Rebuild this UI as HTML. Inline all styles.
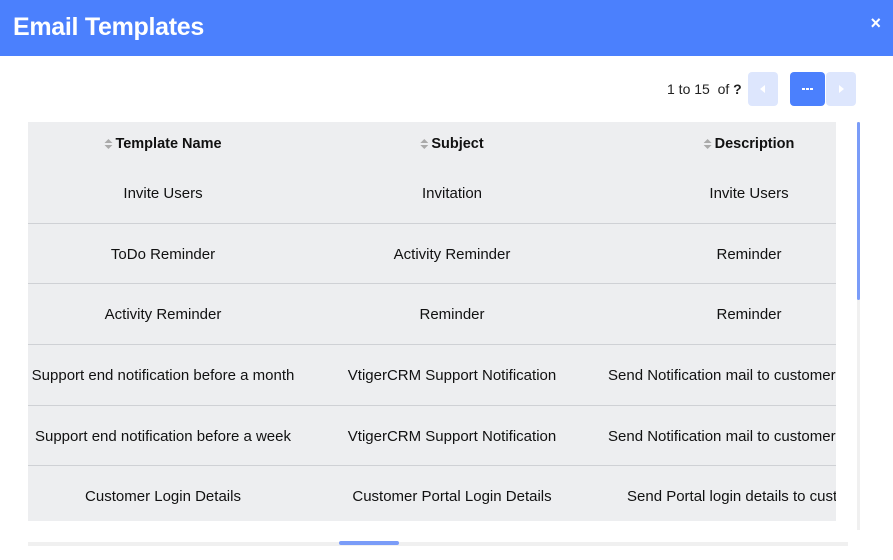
<!DOCTYPE html>
<html><head><style>
*{margin:0;padding:0;box-sizing:border-box}
body{width:893px;height:560px;background:#fff;font-family:"Liberation Sans",sans-serif;position:relative;overflow:hidden}
.hdr{position:absolute;left:0;top:0;width:893px;height:56px;background:#4b80fd}
.hdr h1{position:absolute;left:13px;top:13px;color:#fff;font-size:25px;font-weight:bold;letter-spacing:-0.3px}
.x{position:absolute;right:12px;top:13px;color:#fff;font-size:18px;font-weight:bold}
.pg{position:absolute;left:667px;top:81px;font-size:14px;color:#222}
.btn{position:absolute;top:72px;width:30px;height:34px;border-radius:4px;background:#dde6fd}
.tbl{position:absolute;left:28px;top:122px;width:808px;height:399px;background:#edeef0;overflow:hidden}
.t{position:absolute;font-size:15px;color:#111;white-space:nowrap;transform:translateX(-50%)}
.th{font-weight:bold;font-size:14.5px}
.line{position:absolute;left:0;width:808px;height:1px;background:#cfd1d5}
.ar{display:inline-block;width:8px;vertical-align:middle;margin-right:3px}
</style></head><body>
<div class="hdr"><h1>Email Templates</h1><div class="x">×</div></div>
<div class="pg">1 to 15 &nbsp;of <b>?</b></div>
<div class="btn" style="left:748px"><svg width="30" height="34"><path d="M17 13v8l-5-4z" fill="#fff"/></svg></div>
<div class="btn" style="left:790px;background:#4b80fd;width:35px"><svg width="35" height="34"><rect x="12" y="16" width="3" height="2" fill="#fff"/><rect x="16" y="16" width="3" height="2" fill="#fff"/><rect x="20" y="16" width="3" height="2" fill="#fff"/></svg></div>
<div class="btn" style="left:826px"><svg width="30" height="34"><path d="M13 13v8l5-4z" fill="#fff"/></svg></div>
<div class="tbl">
<div class="t th" style="left:135px;top:14px"><svg class="ar" width="8" height="12"><path d="M0 5L4 1L8 5zM0 7L4 11L8 7z" fill="#aaa"/></svg>Template Name</div>
<div class="t th" style="left:424px;top:14px"><svg class="ar" width="8" height="12"><path d="M0 5L4 1L8 5zM0 7L4 11L8 7z" fill="#aaa"/></svg>Subject</div>
<div class="t th" style="left:721px;top:14px"><svg class="ar" width="8" height="12"><path d="M0 5L4 1L8 5zM0 7L4 11L8 7z" fill="#aaa"/></svg>Description</div>
<div class="t" style="left:135px;top:63px">Invite Users</div><div class="t" style="left:424px;top:63px">Invitation</div><div class="t" style="left:721px;top:63px">Invite Users</div>
<div class="line" style="top:101px"></div>
<div class="t" style="left:135px;top:124px">ToDo Reminder</div><div class="t" style="left:424px;top:124px">Activity Reminder</div><div class="t" style="left:721px;top:124px">Reminder</div>
<div class="line" style="top:161px"></div>
<div class="t" style="left:135px;top:184px">Activity Reminder</div><div class="t" style="left:424px;top:184px">Reminder</div><div class="t" style="left:721px;top:184px">Reminder</div>
<div class="line" style="top:222px"></div>
<div class="t" style="left:135px;top:245px">Support end notification before a month</div><div class="t" style="left:424px;top:245px">VtigerCRM Support Notification</div><div class="t" style="transform:none;left:580px;top:245px">Send Notification mail to customer</div>
<div class="line" style="top:283px"></div>
<div class="t" style="left:135px;top:306px">Support end notification before a week</div><div class="t" style="left:424px;top:306px">VtigerCRM Support Notification</div><div class="t" style="transform:none;left:580px;top:306px">Send Notification mail to customer</div>
<div class="line" style="top:343px"></div>
<div class="t" style="left:135px;top:366px">Customer Login Details</div><div class="t" style="left:424px;top:366px">Customer Portal Login Details</div><div class="t" style="transform:none;left:599px;top:366px">Send Portal login details to customer</div>
</div>
<div style="position:absolute;left:857px;top:122px;width:3px;height:408px;background:#f0f0f0"></div>
<div style="position:absolute;left:857px;top:122px;width:3px;height:178px;background:#7a9cf8;border-radius:2px"></div>
<div style="position:absolute;left:28px;top:542px;width:820px;height:4px;background:#f0f0f0"></div>
<div style="position:absolute;left:339px;top:541px;width:60px;height:4px;background:#7a9cf8;border-radius:2px"></div>
</body></html>
